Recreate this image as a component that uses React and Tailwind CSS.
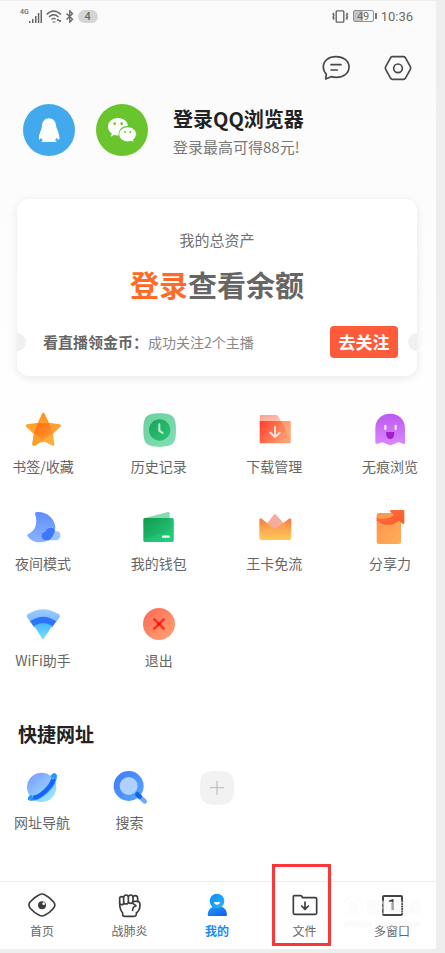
import React from "react";

function Gradient({ id, from, to, x2 = 1, y2 = 1 }) {
  return (
    <linearGradient id={id} x1="0" y1="0" x2={x2} y2={y2}>
      <stop offset="0" stopColor={from} />
      <stop offset="1" stopColor={to} />
    </linearGradient>
  );
}

function Icon({ children }) {
  return (
    <svg className="size-9" viewBox="0 0 108 108" fill="none" aria-hidden="true">
      {children}
    </svg>
  );
}

const features = [
  {
    label: "书签/收藏",
    icon: (
      <Icon>
        <defs>
          <Gradient id="star-a" from="#ff9420" to="#ffb347" x2={0} />
          <Gradient id="star-b" from="#ff6a0c" to="#ff9d35" x2={0.6} />
        </defs>
        <path
          d="M55 7 L69 37 L103 41 L79 64 L84 97 L55 82 L26 97 L31 64 L7 41 L41 37 Z"
          fill="url(#star-a)"
          stroke="url(#star-a)"
          strokeWidth="9"
          strokeLinejoin="round"
        />
        <path d="M39 34 H71 L83 63 L55 84 L28 99 L27 62 Z" fill="url(#star-b)" />
        <path d="M55 84 L27 64 L22 97 Q26 103 32 99 Z" fill="#ff9d2a" />
      </Icon>
    ),
  },
  {
    label: "历史记录",
    icon: (
      <Icon>
        <defs>
          <Gradient id="clock-a" from="#6bcf9d" to="#82dfb5" />
          <Gradient id="clock-b" from="#17a45b" to="#30c578" />
        </defs>
        <path
          d="M56 4 C96 4 105 14 105 54 C105 95 96 104 56 104 C16 104 7 95 7 54 C7 14 16 4 56 4 Z"
          fill="url(#clock-a)"
        />
        <circle cx="56" cy="54" r="32" fill="url(#clock-b)" />
        <path d="M55 37 V56 L65 63" stroke="#c2f3d6" strokeWidth="6" strokeLinecap="round" />
      </Icon>
    ),
  },
  {
    label: "下载管理",
    icon: (
      <Icon>
        <defs>
          <Gradient id="dl-a" from="#ff3d28" to="#ffa071" y2={0.5} />
          <Gradient id="dl-b" from="#ff9e8d" to="#ffc7b5" />
        </defs>
        <path d="M11 13 Q11 9 15 9 H61 Q64 9 66 12 L75 27 H11 Z" fill="url(#dl-b)" />
        <path d="M11 27 H100 Q104 27 104 31 V90 Q104 94 100 94 H15 Q11 94 11 90 Z" fill="url(#dl-a)" />
        <path d="M75 27 H100 Q104 27 104 31 V82 Z" fill="#ffb087" opacity=".55" />
        <path d="M57 45 V73 M43 62 L57 75 L71 62" stroke="#ffe1db" strokeWidth="6" strokeLinecap="round" strokeLinejoin="round" />
      </Icon>
    ),
  },
  {
    label: "无痕浏览",
    icon: (
      <Icon>
        <defs>
          <Gradient id="ghost" from="#bd59ed" to="#d987ff" x2={0} />
        </defs>
        <path
          d="M10 49 C10 22 29 5 54 5 C80 5 99 22 99 49 V92 Q98 97 92 95 L82 91 Q78 90 75 92 L60 98 Q55 101 50 98 L35 92 Q31 90 27 92 L17 95 Q11 97 10 92 Z"
          fill="url(#ghost)"
        />
        <path d="M40 42 V51 M71 42 V51" stroke="#fff" strokeOpacity=".8" strokeWidth="7" strokeLinecap="round" />
        <path d="M42 62 Q42 60 44 60 H65 Q67 60 67 62 Q66 81 55 81 Q43 81 42 62 Z" fill="#a01fc7" />
      </Icon>
    ),
  },
  {
    label: "夜间模式",
    icon: (
      <Icon>
        <defs>
          <Gradient id="moon" from="#5f8dff" to="#8bb5ff" x2={0} />
        </defs>
        <path
          d="M30 14 Q29 9 36 9 C65 7 89 28 91 54 C91 82 70 100 45 100 C27 100 13 91 7 80 Q5 77 10 75 C32 64 39 41 30 14 Z"
          fill="url(#moon)"
        />
        <path d="M61 94 C46 92 48 69 62 68 C66 50 89 50 91 67 C108 62 113 90 94 94 Z" fill="#9cc4ff" />
        <path d="M62 94 C46 92 46 69 61 68 C67 52 86 52 90 64 Q86 84 72 94 Z" fill="#3f76ff" />
      </Icon>
    ),
  },
  {
    label: "我的钱包",
    icon: (
      <Icon>
        <defs>
          <Gradient id="wallet" from="#12994f" to="#28cf80" />
        </defs>
        <path d="M8 28 L81 9 Q86 8 86 13 V38 H8 Z" fill="#89d9b2" />
        <path d="M7 32 Q7 27 12 27 H93 Q98 27 98 32 V94 Q98 99 93 99 H12 Q7 99 7 94 Z" fill="url(#wallet)" />
        <path d="M86 27 H93 Q98 27 98 32 V94 Q98 99 93 99 H12 L7 90 L86 66 Z" fill="#22cf7b" opacity=".45" />
        <path d="M66 83 H83" stroke="#eafff3" strokeWidth="7" strokeLinecap="round" />
      </Icon>
    ),
  },
  {
    label: "王卡免流",
    icon: (
      <Icon>
        <defs>
          <Gradient id="crown" from="#f47b42" to="#ffd15d" x2={0} />
        </defs>
        <path d="M32 44 L53 18 Q57 12 61 18 L84 44 L58 65 Z" fill="#f8aa9b" />
        <path
          d="M10 33 Q10 26 17 29 L57 61 L99 29 Q106 26 106 33 V88 Q106 93 100 93 H16 Q10 93 10 88 Z"
          fill="url(#crown)"
        />
        <path d="M32 42 L57 61 L84 41 L102 90 L98 93 H15 Z" fill="#ffb152" opacity=".35" />
      </Icon>
    ),
  },
  {
    label: "分享力",
    icon: (
      <Icon>
        <defs>
          <Gradient id="share-a" from="#ff9350" to="#ffad58" />
          <Gradient id="share-b" from="#ff7045" to="#f95c25" />
        </defs>
        <path d="M14 19 Q14 12 21 12 H87 V98 Q87 105 80 105 H21 Q14 105 14 98 Z" fill="url(#share-a)" />
        <path
          d="M14 26 Q40 36 66 18 L55 9 Q52 3 58 3 H94 Q97 3 97 7 V43 Q94 47 90 43 L81 35 Q49 60 14 35 Z"
          fill="url(#share-b)"
        />
      </Icon>
    ),
  },
  {
    label: "WiFi助手",
    icon: (
      <Icon>
        <defs>
          <Gradient id="wifi-a" from="#9bceff" to="#7db5f8" x2={0} />
          <Gradient id="wifi-b" from="#4bb6ff" to="#72e0ff" x2={0} />
        </defs>
        <path d="M6 33 Q4 28 8 25 Q54 -6 102 25 Q106 28 104 33 L93 49 H17 Z" fill="url(#wifi-a)" />
        <path d="M15 46 Q54 18 94 46 L82 63 H27 Z" fill="#2c74fb" />
        <path d="M27 59 Q54 43 82 59 L57 97 Q54 101 51 97 Z" fill="url(#wifi-b)" />
      </Icon>
    ),
  },
  {
    label: "退出",
    icon: (
      <Icon>
        <defs>
          <Gradient id="exit" from="#ff6554" to="#ffa775" />
        </defs>
        <circle cx="54" cy="54" r="48" fill="url(#exit)" />
        <path d="M40 40 L68 68 M68 40 L40 68" stroke="#ff3023" strokeWidth="8" strokeLinecap="round" />
        <circle cx="54" cy="54" r="5" fill="#ed1709" />
      </Icon>
    ),
  },
];

const shortcuts = [
  {
    label: "网址导航",
    icon: (
      <Icon>
        <defs>
          <Gradient id="planet" from="#7795ff" to="#9ee8ff" x2={0.8} />
        </defs>
        <circle cx="53" cy="52" r="44" fill="url(#planet)" />
        <path d="M85 19 Q92 10 94 18 C94 47 48 91 20 87 Q12 86 21 80" stroke="#2297ff" strokeWidth="10" strokeLinecap="round" />
        <path d="M88 27 C82 50 49 81 28 83" stroke="#1763ff" strokeWidth="13" />
      </Icon>
    ),
  },
  {
    label: "搜索",
    icon: (
      <Icon>
        <defs>
          <Gradient id="search" from="#3f79fa" to="#56a9ff" />
        </defs>
        <circle cx="50" cy="48" r="45" fill="url(#search)" />
        <circle cx="50" cy="48" r="27" fill="#b0d0ff" />
        <path d="M76 73 L98 94" stroke="#73a5ff" strokeWidth="14" strokeLinecap="round" />
        <path d="M76 73 L83 80" stroke="#1265e8" strokeWidth="14" strokeLinecap="round" />
      </Icon>
    ),
  },
  {
    label: "",
    name: "添加",
    icon: (
      <Icon>
        <path
          d="M54 2 C95 2 105 12 105 53 C105 94 95 104 54 104 C13 104 3 94 3 53 C3 12 13 2 54 2 Z"
          fill="#f2f2f2"
        />
        <path d="M54 32 V74 M33 53 H75" stroke="#c4c4c4" strokeWidth="4" />
      </Icon>
    ),
  },
];

function NavIcon({ children }) {
  return (
    <svg
      className="size-7"
      viewBox="0 0 84 84"
      fill="none"
      stroke="#3d3d3d"
      strokeWidth="5"
      strokeLinecap="round"
      strokeLinejoin="round"
      aria-hidden="true"
    >
      {children}
    </svg>
  );
}

const tabs = [
  {
    label: "首页",
    icon: (
      <NavIcon>
        <path d="M34 11 Q42 7 50 11 Q65 18 77 33 Q84 42 77 51 Q65 66 50 73 Q42 77 34 73 Q19 66 6 51 Q0 42 6 33 Q19 18 34 11 Z" />
        <circle cx="42" cy="43" r="12" fill="#3d3d3d" stroke="none" />
        <circle cx="47" cy="38" r="4" fill="#fff" stroke="none" />
      </NavIcon>
    ),
  },
  {
    label: "战肺炎",
    icon: (
      <NavIcon>
        <path d="M11 37 V23 Q11 17 17 17 Q23 17 23 23 V35 Q23 41 17 41 Q11 41 11 37 M23 20 Q23 12 31 12 Q37 12 37 20 V33 Q37 39 30 39 Q23 39 23 33 M37 20 Q37 12 44 12 Q51 12 51 20 V31 Q50 37 44 37 Q37 37 37 31 M51 20 Q52 14 58 14 Q65 14 65 22 V31" />
        <path d="M11 37 Q11 56 20 66 V72 Q21 76 26 76 H55 Q60 76 61 71 V66 Q72 58 72 42 Q72 31 64 31 H53 Q48 33 51 38 L60 44 Q49 48 50 58" />
      </NavIcon>
    ),
  },
  {
    label: "我的",
    active: true,
    icon: (
      <NavIcon>
        <defs>
          <Gradient id="me-a" from="#0d8bf6" to="#28b7fd" />
          <Gradient id="me-b" from="#2198fa" to="#0d60e6" />
        </defs>
        <path d="M14 71 C15 58 21 51 29 48 H57 C65 51 71 58 72 71 Q72 75 68 75 H18 Q14 75 14 71 Z" fill="url(#me-b)" stroke="none" />
        <circle cx="42" cy="30" r="22" fill="url(#me-a)" stroke="none" />
        <path d="M33 33 H51 Q50 41 42 41 Q34 41 33 33 Z" fill="#fff" stroke="none" />
      </NavIcon>
    ),
  },
  {
    label: "文件",
    icon: (
      <NavIcon>
        <path d="M10 14 H29 Q32 14 33 17 L35 20 H73 Q77 20 77 24 V66 Q77 70 73 70 H11 Q7 70 7 66 V18 Q7 14 10 14 Z" />
        <path d="M42 33 V54 M32 45 L42 55 L52 45" />
      </NavIcon>
    ),
  },
  { label: "多窗口", icon: null },
];

function StatusBar() {
  return (
    <div className="flex h-[30px] items-center justify-between pl-5 pr-[23px] font-['Roboto','Liberation_Sans',sans-serif] text-[#6b6b6b]">
      <div className="flex items-center gap-1">
        <div className="flex items-center">
          <span className="mb-2 text-[7px] leading-none font-medium">4G</span>
          <svg className="h-[13px] w-[13px]" viewBox="0 0 13 13" fill="#666" aria-hidden="true">
            <path d="M0 11h1.5v2H0zM3 9h1.5v4H3zM6 6h1.5v7H6zM8.8 3h1.5v10H8.8zM11.5 0H13v13h-1.5z" />
          </svg>
        </div>
        <svg className="h-[13px] w-4" viewBox="0 0 16 13" fill="none" stroke="#666" strokeWidth="1.4" aria-hidden="true">
          <path d="M.7 4.5 Q7.5 -2.5 15 4.5 M3 7 Q7.5 2.5 12.5 7 M5.5 9.5 Q7.5 7.3 9.5 9.3" />
          <path d="M6.5 12h3M11 10.5h4M11 10.5l1.5-1.5M15 10.5l-1.5 1.5" strokeWidth="1.2" />
        </svg>
        <svg className="h-[13px] w-2" viewBox="0 0 8 13" fill="none" stroke="#666" strokeWidth="1.3" aria-hidden="true">
          <path d="M.5 3.5l6 5.700-2.700 3V.8l2.700 3L.5 9.500" />
        </svg>
        <span className="flex h-[13px] w-5 items-center justify-center rounded-full bg-[#d5d5d5] text-[11px] leading-none font-medium">4</span>
      </div>
      <div className="flex items-center gap-1">
        <svg className="h-[13px] w-[18px]" viewBox="0 0 18 13" fill="none" stroke="#666" strokeWidth="1.4" aria-hidden="true">
          <rect x="5.2" y=".9" width="7.6" height="11.2" rx=".8" />
          <path d="M3 3l-1 1.300 1 1.300-1 1.300 1 1.300-1 1.300M15.500 3l1 1.300-1 1.300 1 1.300-1 1.300 1 1.300" />
        </svg>
        <div className="flex items-center gap-px">
          <span className="flex h-3 w-[21px] items-center justify-center rounded-xs border border-[#8f8f8f] bg-linear-to-r from-[#c4c4c4] from-50% to-transparent to-50% text-[11px] leading-none">49</span>
          <span className="h-1.5 w-0.5 bg-[#777]" />
        </div>
        <span className="text-[13px] leading-none">10:36</span>
      </div>
    </div>
  );
}

function Header() {
  return (
    <header>
      <div className="flex h-[73px] items-center justify-end gap-[34px] pr-6">
        <button type="button" aria-label="消息">
          <svg className="size-7" viewBox="0 0 84 84" fill="none" stroke="#484848" strokeWidth="5" strokeLinecap="round" strokeLinejoin="round">
            <path d="M11 75 L13 60 Q4 52 4 39 C4 19 21 8 42 8 C64 8 81 20 81 39 C81 58 64 70 43 70 Q34 70 27 68 Z" />
            <path d="M27 32 H57 M27 48 H46" />
          </svg>
        </button>
        <button type="button" aria-label="设置">
          <svg className="size-7" viewBox="0 0 84 84" fill="none" stroke="#484848" strokeWidth="5" strokeLinejoin="round">
            <path d="M25 8 H59 Q62 8 64 11 L79 38 Q81 42 79 46 L64 73 Q62 76 59 76 H25 Q22 76 20 73 L5 46 Q3 42 5 38 L20 11 Q22 8 25 8 Z" />
            <circle cx="42" cy="43" r="13" />
          </svg>
        </button>
      </div>
      <div className="flex items-start pl-[23px]">
        <button type="button" aria-label="QQ登录" className="size-[52px] rounded-full bg-[#42a9ed]">
          <svg viewBox="0 0 156 156" fill="#fff">
            <path d="M78 43 C92 43 99 54 100 70 C103 78 108 88 109 98 C110 105 108 108 106 107 Q104 107 101 101 Q99 106 95 109 Q101 110 101 114 H55 Q55 110 61 109 Q56 106 54 101 Q51 108 48 107 Q46 96 51 86 Q53 80 56 73 C56 54 64 43 78 43 Z" />
          </svg>
        </button>
        <button type="button" aria-label="微信登录" className="ml-[21px] size-[52px] rounded-full bg-[#6ac42d]">
          <svg viewBox="0 0 156 156" fill="#fff">
            <path d="M66 42 C83 42 95 53 96 66 C78 65 66 78 69 94 Q61 95 54 92 L45 98 L47 88 Q36 80 36 68 C36 53 49 42 66 42 Z" />
            <path d="M95 69 C110 69 121 79 121 91 Q121 101 112 107 L114 115 L105 111 Q100 113 95 113 C80 113 69 103 69 91 C69 79 80 69 95 69 Z" stroke="#6ac42d" strokeWidth="2" />
            <g fill="#6ac42d">
              <circle cx="56" cy="59" r="4" />
              <circle cx="77" cy="59" r="4" />
              <circle cx="87" cy="84" r="3" />
              <circle cx="103" cy="84" r="3" />
            </g>
          </svg>
        </button>
        <div className="ml-[25px]">
          <h1 className="text-[20px] leading-[30px] font-bold text-[#222]">登录QQ浏览器</h1>
          <p className="text-[15px] leading-[26px] text-[#777]">登录最高可得88元!</p>
        </div>
      </div>
    </header>
  );
}

function AssetCard() {
  return (
    <section className="relative mt-[39px] mr-[19px] ml-[17px] overflow-hidden rounded-xl bg-white pt-[29px] pb-[18px] shadow-[0_2px_10px_rgba(0,0,0,0.09)]">
      <span className="absolute bottom-[25px] -left-[9px] size-[18px] rounded-full bg-[#f0f0f0]" />
      <span className="absolute -right-[9px] bottom-[25px] size-[18px] rounded-full bg-[#f0f0f0]" />
      <h2 className="text-center text-[15px] leading-6 text-[#707070]">我的总资产</h2>
      <p className="mt-3 text-center text-[29px] leading-10 font-bold text-[#666]">
        <a href="#login" className="text-[#ff6a26]">登录</a>查看余额
      </p>
      <div className="mt-[22px] flex h-8 items-center justify-between pr-[19px] pl-[26px]">
        <p className="text-[14px] leading-6 text-[#888]">
          <strong className="text-[15px] font-bold text-[#666]">看直播领金币：</strong>成功关注2个主播
        </p>
        <button type="button" className="h-8 w-[68px] rounded bg-[#ff5a3a] text-[17px] leading-6 font-bold text-white">去关注</button>
      </div>
    </section>
  );
}

function Tile({ icon, label, name, compact }) {
  return (
    <button
      type="button"
      aria-label={name}
      className={compact ? "flex flex-col items-center gap-1.5" : "flex flex-col items-center gap-2"}
    >
      {icon}
      {label && <span className="text-[14px] leading-5 whitespace-nowrap text-[#666]">{label}</span>}
    </button>
  );
}

function TabBar() {
  return (
    <nav className="relative mt-auto grid h-[68px] grid-cols-[repeat(5,56px)] justify-between border-t border-[#ececec] pt-[9px] pr-4 pl-3.5">
      {tabs.map((tab) => (
        <a
          key={tab.label}
          href={"#" + tab.label}
          className={
            tab.active
              ? "flex flex-col items-center gap-0.5 text-[12px] leading-[20px] font-bold text-[#168cf5]"
              : "flex flex-col items-center gap-0.5 text-[12px] leading-[20px] text-[#666]"
          }
        >
          {tab.icon || (
            <span className="flex size-7 items-center justify-center">
              <span className="flex size-[21px] items-center justify-center rounded-xs border-2 border-[#444] font-['Roboto',sans-serif] text-[15px] leading-none font-medium text-[#333]">1</span>
            </span>
          )}
          {tab.label}
        </a>
      ))}
      <div className="pointer-events-none absolute -top-[18px] right-[105px] h-[82px] w-[59px] border-3 border-[#fa3737]" />
      <div className="pointer-events-none absolute top-3 right-3 w-20 text-white opacity-60 [text-shadow:0_0_1px_#ddd]">
        <div className="flex items-center gap-1">
          <span className="flex size-[18px] items-center justify-center rounded-full border-2 border-white text-[14px] leading-none font-bold shadow-[0_0_1px_#ccc]">S</span>
          <span className="text-[14px] leading-6 whitespace-nowrap">搜狗指南</span>
        </div>
        <p className="text-[9px] leading-3">zhinan.sogou.com</p>
      </div>
    </nav>
  );
}

export default function App() {
  return (
    <div className="flex min-h-screen flex-col bg-[#eeeeee] pt-px pr-[9px] pb-1 font-['Noto_Sans_CJK_SC',sans-serif]">
      <main className="flex flex-1 flex-col bg-linear-to-b from-[#fafafa] to-white to-50%">
        <StatusBar />
        <Header />
        <AssetCard />
        <section className="mt-9 grid grid-cols-[repeat(4,64px)] justify-between gap-y-[33px] pr-3.5 pl-[11px]">
          {features.map((item) => (
            <Tile key={item.label} {...item} />
          ))}
        </section>
        <section className="mt-[50px] pb-10">
          <h2 className="pl-[18px] text-[19px] leading-7 font-bold text-[#222]">快捷网址</h2>
          <div className="mt-[22px] grid grid-cols-[repeat(5,56px)] items-start justify-between pr-4 pl-3.5">
            {shortcuts.map((item) => (
              <Tile key={item.name || item.label} compact {...item} />
            ))}
          </div>
        </section>
        <TabBar />
      </main>
    </div>
  );
}
